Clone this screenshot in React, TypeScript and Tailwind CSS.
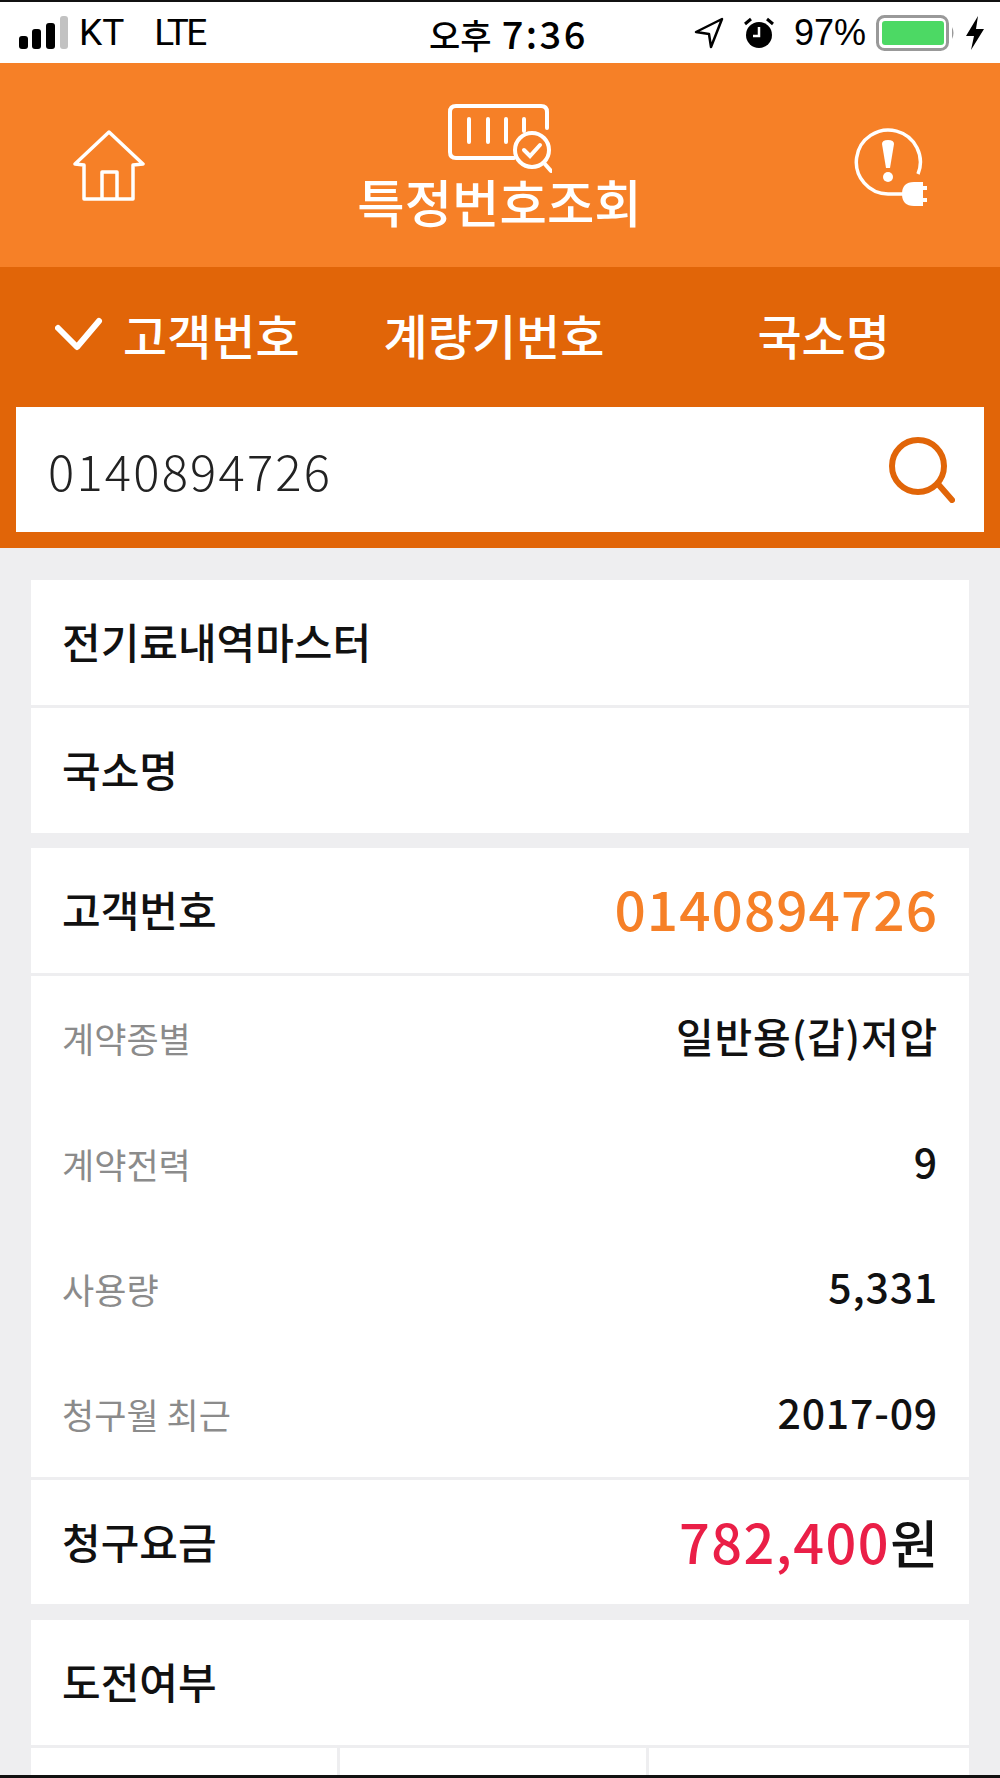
import type { ReactNode } from 'react';

const rows = [
  { label: '계약종별', value: '일반용(갑)저압' },
  { label: '계약전력', value: '9' },
  { label: '사용량', value: '5,331' },
  { label: '청구월 최근', value: '2017-09' },
];

const font = "font-['Noto_Sans_CJK_KR','Noto_Sans',sans-serif]";

const StatusBar = () => (
  <div className="h-[61px] bg-white flex items-center justify-between pl-[19px] pr-4 font-['Liberation_Sans',sans-serif] text-black text-[36px]">
    <div className="flex-1 flex items-center font-['Roboto',sans-serif] text-[37px]">
      <svg width="50" height="34" viewBox="0 0 50 34" className="mr-[10px]">
        <rect x="0" y="20" width="9" height="13" rx="3" fill="#000" />
        <rect x="13" y="13" width="9" height="20" rx="3" fill="#000" />
        <rect x="27" y="7" width="9" height="26" rx="3" fill="#000" />
        <rect x="41" y="0" width="8" height="33" rx="3" fill="#c2c2c2" />
      </svg>
      <span>KT</span>
      <span className="ml-[30px] tracking-[-2.5px]">LTE</span>
    </div>
    <div className={`${font} flex items-baseline font-medium mr-[106px]`}>
      <span className="text-[34px] mr-[10px]">오후</span>
      <span className="text-[38px] tracking-[2.5px]">7:36</span>
    </div>
    <div className="flex items-center">
      <svg width="30" height="32" viewBox="0 0 30 32" className="mr-[20px]">
        <path d="M2 15 L28 2 L17 30 L15 17 Z" fill="none" stroke="#000" strokeWidth="2.5" strokeLinejoin="round" />
      </svg>
      <svg width="30" height="32" viewBox="0 0 30 32" className="mr-[20px]">
        <circle cx="15" cy="18" r="13" fill="#000" />
        <path d="M15 10 V19 H9" fill="none" stroke="#fff" strokeWidth="2.5" />
        <path d="M1 7 L7 2 M29 7 L23 2" stroke="#000" strokeWidth="3" />
      </svg>
      <span className="mr-[10px]">97%</span>
      <svg width="80" height="36" viewBox="0 0 80 36" className="mr-[10px]">
        <rect x="1.5" y="1.5" width="70" height="33" rx="7" fill="none" stroke="#999" strokeWidth="3" />
        <rect x="6" y="6" width="62" height="24" rx="3" fill="#4cd964" />
        <path d="M76 12 Q79 18 76 24 Z" fill="#999" />
      </svg>
      <svg width="18" height="34" viewBox="0 0 18 34">
        <path d="M12 0 L0 20 H8 L5 34 L18 13 H10 Z" fill="#000" />
      </svg>
    </div>
  </div>
);

const Header = () => (
  <div className="h-[204px] bg-[#f68027] flex items-start justify-between pl-[73px] pr-[72px] text-white">
    <svg width="72" height="72" viewBox="0 0 72 72" className="mt-[67px]" fill="none" stroke="#fff" strokeWidth="3.5" strokeLinejoin="round">
      <path d="M36 2 L70 34 L60 35 V69 H11 V35 L2 34 Z" />
      <path d="M29 69 V42 H44 V69" />
    </svg>
    <div className="flex flex-col items-center">
      <svg width="104" height="70" viewBox="0 0 104 70" className="mt-[41px]" fill="none" stroke="#fff" strokeWidth="4" strokeLinecap="round">
        <path d="M99 24 V8 Q99 2 93 2 H8 Q2 2 2 8 V48 Q2 54 8 54 H66" />
        <path d="M21 15 V38 M40 15 V38 M58 15 V38 M76 15 V27" />
        <circle cx="84" cy="46" r="17" />
        <path d="M76 46 L82 52 L92 41" />
        <path d="M96 59 L103 67" />
      </svg>
      <div className={`${font} text-[51.5px] leading-[60px] -mt-[3px] font-medium`}>특정번호조회</div>
    </div>
    <svg width="74" height="82" viewBox="0 0 74 82" className="mt-[63px]" fill="none" stroke="#fff" strokeWidth="3.5">
      <path d="M64 48 A32 32 0 1 0 34 68 H52" />
      <path d="M28 18 Q28 14 34 14 Q40 14 40 18 L36 42 H32 Z" fill="#fff" stroke="none" />
      <circle cx="34" cy="51" r="5" fill="#fff" stroke="none" />
      <path d="M50 68 Q50 58 60 58 H67 V78 H60 Q50 78 50 68 Z M66 62 H73 M66 74 H73" fill="#fff" strokeWidth="4" />
    </svg>
  </div>
);

const Tabs = () => (
  <div className="bg-[#e16508] pb-4">
    <div className={`h-[140px] pb-[6px] px-4 grid grid-cols-3 items-center text-center text-white text-[48px] font-medium ${font}`}>
      <div className="flex items-center justify-center gap-[18px]">
        <svg width="50" height="34" viewBox="0 0 50 34" fill="none" stroke="#fff" strokeWidth="6" strokeLinecap="round" strokeLinejoin="round">
          <path d="M3 11 L22 30 L44 4" />
        </svg>
        <span>고객번호</span>
      </div>
      <div className="pr-[12px]">계량기번호</div>
      <div className="pl-[2px]">국소명</div>
    </div>
    <div className="mx-4 h-[125px] bg-white flex items-center justify-between pl-[32px] pr-[29px]">
      <span className={`${font} text-[49px] font-light tracking-[2.2px] text-[#222]`}>0140894726</span>
      <svg width="66" height="66" viewBox="0 0 66 66" fill="none" stroke="#e16508" strokeWidth="6" strokeLinecap="round">
        <circle cx="29" cy="29" r="26" />
        <path d="M49 47 L63 63" />
      </svg>
    </div>
  </div>
);

const TitleRow = ({ children, height = 'h-[125px]' }: { children: ReactNode; height?: string }) => (
  <div className={`${height} pb-1 flex items-center justify-between px-[31px] text-[42px] font-medium text-[#111]`}>
    {children}
  </div>
);

const Divider = () => <div className="h-[3px] bg-[#eeeef0]" />;

export default function App() {
  return (
    <div className={`w-[1000px] h-[1778px] flex flex-col overflow-hidden bg-[#eeeef0] ${font}`}>
      <div className="h-[2px] bg-[#111] shrink-0" />
      <StatusBar />
      <Header />
      <Tabs />
      <div className="flex-1 overflow-hidden px-[31px] pt-8 flex flex-col">
        <div className="bg-white">
          <TitleRow>전기료내역마스터</TitleRow>
          <Divider />
          <TitleRow>국소명</TitleRow>
        </div>
        <div className="bg-white mt-[15px]">
          <TitleRow>
            <span>고객번호</span>
            <span className="text-[#f68027] text-[55px] font-medium tracking-[1px] pb-[2px]">0140894726</span>
          </TitleRow>
          <Divider />
          {rows.map((row) => (
            <div key={row.label} className="h-[125.25px] flex items-center justify-between px-[31px]">
              <span className="text-[35px] text-[#8b8b8b]">{row.label}</span>
              <span className="text-[41px] font-medium tracking-[0.8px] text-[#111] pb-[6px]">{row.value}</span>
            </div>
          ))}
          <Divider />
          <TitleRow height="h-[124px]">
            <span>청구요금</span>
            <span className="text-[#111] text-[52px]">
              <span className="text-[#ea1f47] text-[54px] tracking-[1.5px]">782,400</span>원
            </span>
          </TitleRow>
        </div>
        <div className="bg-white mt-4">
          <TitleRow>도전여부</TitleRow>
          <Divider />
          <div className="grid grid-cols-[306px_306px_1fr] gap-[3px] h-[40px] bg-[#eeeef0]">
            <div className="bg-white" />
            <div className="bg-white" />
            <div className="bg-white" />
          </div>
        </div>
      </div>
      <div className="h-[3px] bg-[#111] shrink-0" />
    </div>
  );
}
